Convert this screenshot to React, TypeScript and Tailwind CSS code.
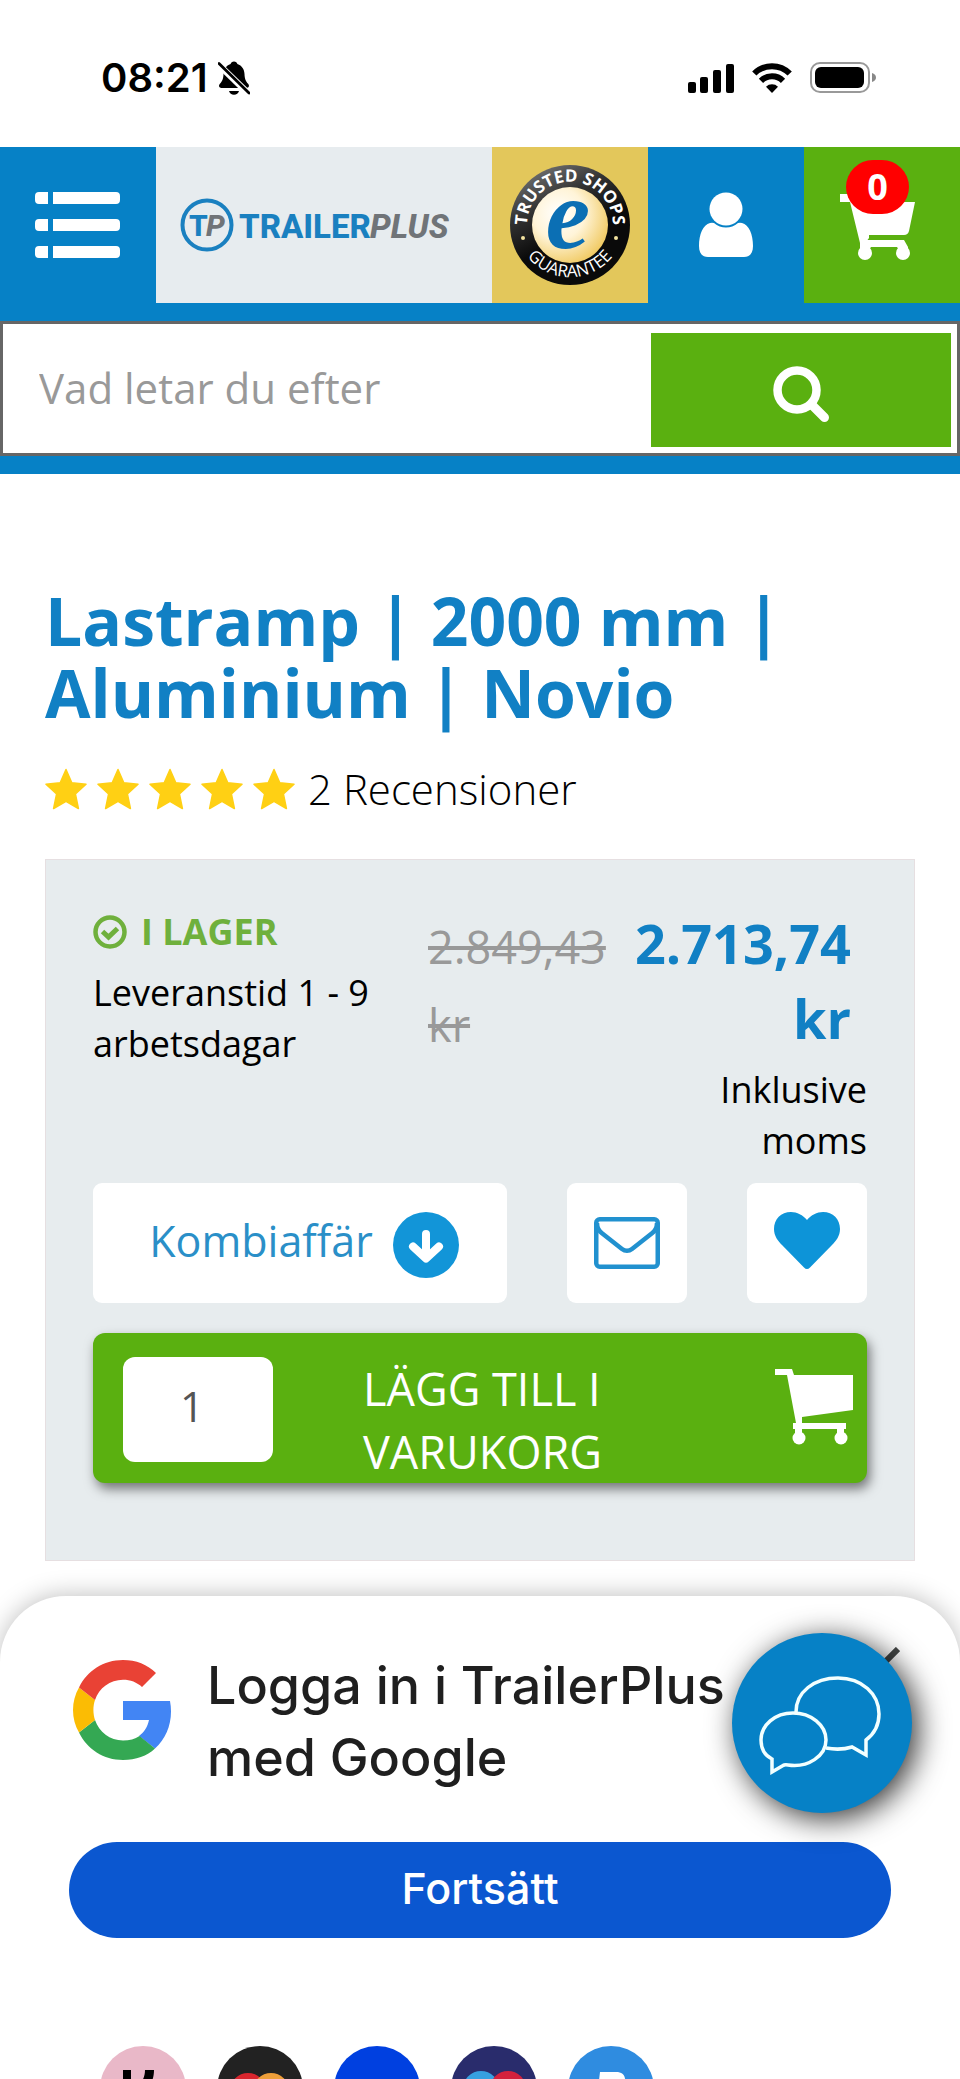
import React from "react";

const Star = () => (
  <svg viewBox="0 0 42 42" className="w-[42px] h-[42px]" fill="#ffd014" stroke="#ffd014" strokeWidth="1.500" strokeLinejoin="round" aria-hidden="true">
    <path d="M21 1.500l5.800 13.200 14.200 1.600-10.600 9.700 3 14.500L21 33.300 8.600 40.500l3-14.500L1 16.300l14.200-1.600z" />
  </svg>
);

const StatusBar = () => (
  <div className="h-[147px] pt-2 pl-[101px] pr-[84px] flex items-center justify-between">
    <div className="flex items-center gap-[10px]">
      <span className="font-['Inter',sans-serif] font-semibold text-[40px] leading-none text-black">
        08:21
      </span>
      <svg viewBox="0 0 32 36" className="w-8 h-9" aria-hidden="true">
        <path
          d="M16 1.500c-1.800 0-3 1-3.400 2.400C8 5.500 5.600 9.500 5.500 14c-.1 5-1.500 7.500-3.600 9.800-1.600 1.800-.9 4.200 1.600 4.200h25c2.500 0 3.200-2.400 1.600-4.200-2.100-2.300-3.500-4.800-3.600-9.800-.1-4.500-2.500-8.500-7.100-10.100C19 2.500 17.800 1.500 16 1.500zM11 31h10c-.5 2.300-2.600 3.800-5 3.800S11.500 33.300 11 31z"
          fill="#000"
        />
        <path d="M-1 3L33 36" stroke="#fff" strokeWidth="6.500" />
        <path d="M1 3.500L31 33" stroke="#000" strokeWidth="2.800" strokeLinecap="round" />
      </svg>
    </div>
    <div className="flex items-center gap-[18px]">
      <svg viewBox="0 0 46 30" className="w-[46px] h-[30px]" aria-hidden="true">
        <rect x="0" y="19" width="8" height="11" rx="2" />
        <rect x="12" y="14" width="8" height="16" rx="2" />
        <rect x="25" y="7" width="8" height="23" rx="2" />
        <rect x="38" y="1" width="8" height="29" rx="2" />
      </svg>
      <svg viewBox="0 0 40 30" className="w-10 h-[30px]" fill="none" stroke="#000" strokeWidth="6" aria-hidden="true">
        <path d="M2.300 10.500a25 25 0 0 1 35.400 0" />
        <path d="M9 17.800a15.500 15.500 0 0 1 22 0" />
        <path d="M20 30l-6-6.200a8.500 8.500 0 0 1 12 0z" fill="#000" stroke="none" />
      </svg>
      <svg viewBox="0 0 66 31" className="w-[66px] h-[31px]" aria-hidden="true">
        <rect x="1" y="1" width="58" height="29" rx="9" fill="none" stroke="#999" strokeWidth="2" />
        <rect x="5" y="5" width="49" height="21" rx="6" />
        <path d="M62 11c2.500.8 4 2.500 4 4.500S64.500 19.200 62 20z" fill="#888" />
      </svg>
    </div>
  </div>
);

const Logo = () => (
  <svg viewBox="0 0 280 54" className="w-[280px] h-[54px]" aria-label="TrailerPlus">
    <circle cx="27" cy="27" r="24.500" fill="none" stroke="#1a80c0" strokeWidth="4" />
    <g fontFamily="Roboto, sans-serif" fontWeight="800">
      <text x="9" y="38" fontSize="30" fill="#1a80c0">T</text>
      <text x="26" y="38" fontSize="30" fill="#707478" fontStyle="italic">P</text>
      <text x="59" y="40" fontSize="33" fill="#1a80c0">TRAILER</text>
      <text x="190" y="40" fontSize="33" fill="#707478" fontStyle="italic">PLUS</text>
    </g>
  </svg>
);

const TrustedSeal = () => (
  <svg viewBox="0 0 120 120" className="w-[120px] h-[120px]" aria-hidden="true">
    <defs>
      <linearGradient id="ring" x1="0.200" y1="0" x2="0.500" y2="0.600">
        <stop offset="0" stopColor="#777" />
        <stop offset="0.500" stopColor="#333" />
        <stop offset="1" stopColor="#0a0a0a" />
      </linearGradient>
      <radialGradient id="gold" cx="0.350" cy="0.350" r="0.750">
        <stop offset="0" stopColor="#fff" />
        <stop offset="0.450" stopColor="#fff4d8" />
        <stop offset="1" stopColor="#efc555" />
      </radialGradient>
      <path id="arcTop" d="M18.500 71A43 43 0 1 1 101.500 71" />
      <path id="arcBottom" d="M6 65A54.500 54.500 0 0 0 114 65" />
    </defs>
    <circle cx="60" cy="60" r="60" fill="url(#ring)" />
    <circle cx="60" cy="60" r="38" fill="url(#gold)" />
    <text fontFamily="'Open Sans', sans-serif" fontWeight="700" fontSize="17" fill="#fff" textAnchor="middle">
      <textPath href="#arcTop" startOffset="50%">TRUSTED SHOPS</textPath>
    </text>
    <text fontFamily="'Open Sans', sans-serif" fontSize="17" fill="#fff" textAnchor="middle">
      <textPath href="#arcBottom" startOffset="50%">GUARANTEE</textPath>
    </text>
    <circle cx="13" cy="73" r="2" fill="#f3e3a0" />
    <circle cx="106" cy="73" r="2" fill="#f3e3a0" />
    <text x="58" y="83" textAnchor="middle" fontFamily="'Liberation Serif', serif" fontStyle="italic" fontWeight="700" fontSize="100" fill="#0b6fb4">
      e
    </text>
  </svg>
);

const Header = () => (
  <header className="bg-[#0681c6] pb-[18px]">
    <div className="flex h-[156px]">
      <button aria-label="Meny" className="w-[156px] flex items-center justify-center">
        <svg viewBox="0 0 86 68" className="w-[86px] h-[68px]" fill="#fff">
          <path d="M4 1h9v12H4a4 4 0 0 1-4-4V5a4 4 0 0 1 4-4zM18 1h63a4 4 0 0 1 4 4v4a4 4 0 0 1-4 4H18z" />
          <path d="M4 28h9v12H4a4 4 0 0 1-4-4v-4a4 4 0 0 1 4-4zM18 28h63a4 4 0 0 1 4 4v4a4 4 0 0 1-4 4H18z" />
          <path d="M4 55h9v12H4a4 4 0 0 1-4-4v-4a4 4 0 0 1 4-4zM18 55h63a4 4 0 0 1 4 4v4a4 4 0 0 1-4 4H18z" />
        </svg>
      </button>
      <a href="#" className="flex-1 bg-[#e7ecef] flex items-center pl-6">
        <Logo />
      </a>
      <a href="#" aria-label="Trusted Shops" className="w-[156px] bg-[#e3c75b] flex items-center justify-center">
        <TrustedSeal />
      </a>
      <a href="#" aria-label="Mitt konto" className="w-[156px] flex items-center justify-center">
        <svg viewBox="0 0 54 66" className="w-[54px] h-[66px]" fill="#fff">
          <path d="M11 31C4 33 0 42 0 54c0 7 3 11 9 11h36c6 0 9-4 9-11 0-12-4-21-11-23a8 8 0 0 0-4 0c-7 6-17 6-24 0a8 8 0 0 0-4 0z" />
          <circle cx="27" cy="17" r="16.500" />
        </svg>
      </a>
      <a href="#" aria-label="Varukorg" className="relative w-[156px] pr-2 pt-1 bg-[#5ab010] flex items-center justify-center">
        <svg viewBox="0 0 76 66" className="w-[76px] h-[66px]" fill="#fff">
          <path d="M0 0h14l3 8h58l-6 29q-1 4-5 4H29v3l-3 4-6 1L10 8H0z" />
          <path d="M20 46h44l4 7v3h-9l-2-3H31l-2 3h-9z" />
          <circle cx="25" cy="59" r="7" />
          <circle cx="63" cy="59" r="7" />
        </svg>
        <span className="absolute left-[42px] top-[13px] w-[63px] h-[54px] rounded-[27px] bg-[#ff0000] text-white text-[36px] leading-[54px] font-bold text-center">
          0
        </span>
      </a>
    </div>
    <form className="mt-[18px] border-3 border-[#666] bg-white flex pt-[9px] pb-[6px] pr-[6px]">
      <input
        type="text"
        aria-label="Sök"
        placeholder="Vad letar du efter"
        className="flex-1 min-w-0 pl-9 pb-[6px] text-[42px] placeholder:text-[#999] outline-none"
      />
      <button type="button" aria-label="Sök" className="w-[300px] h-[114px] pt-2 bg-[#5ab010] flex items-center justify-center">
        <svg viewBox="0 0 58 58" className="w-[58px] h-[58px]" fill="none" stroke="#fff" strokeLinecap="round">
          <circle cx="25" cy="25" r="19.500" strokeWidth="8.500" />
          <path d="M41 41l11.500 11.500" strokeWidth="9" />
        </svg>
      </button>
    </form>
  </header>
);

const BuyBox = () => (
  <section className="mt-10 border border-[#e6dfe1] bg-[#e7ecee] px-[47px] pt-[46px] pb-[77px]">
    <div className="grid grid-cols-[335px_1fr_254px] text-[36px] leading-[51px] text-black">
      <div>
        <p className="flex items-center gap-[14px] font-bold text-[#6fb03c]">
          <svg viewBox="0 0 34 34" className="w-[34px] h-[34px]" fill="none" stroke="#6fb03c" aria-hidden="true">
            <circle cx="17" cy="17" r="14.500" strokeWidth="4.500" />
            <path d="M9.500 16.500l6 5.500 9-8.500" strokeWidth="5" />
          </svg>
          I LAGER
        </p>
        <p className="mt-[10px]">
          Leveranstid 1 - 9<br />
          arbetsdagar
        </p>
      </div>
      <s className="pt-[2px] text-[45px] leading-[78px] text-[#999]">
        2.849,43<br />
        kr
      </s>
      <div className="text-right">
        <p className="pr-4 text-[54px] leading-[75px] font-bold text-[#1180c4]">
          2.713,74<br />
          kr
        </p>
        <p className="mt-2">
          Inklusive<br />
          moms
        </p>
      </div>
    </div>

    {/* Secondary actions */}
    <div className="mt-[17px] flex gap-[60px]">
      <button className="flex-1 h-[120px] pb-1 pl-2 rounded-[9px] bg-white flex items-center justify-center gap-5 text-[43px] font-medium text-[#2a8fc8]">
        Kombiaffär
        <svg viewBox="0 0 66 66" className="mt-2 w-[66px] h-[66px]" aria-hidden="true">
          <circle cx="33" cy="33" r="33" fill="#1295d8" />
          <path d="M33 22v24M20 34.500l13 12 13-12" fill="none" stroke="#fff" strokeWidth="8" strokeLinecap="round" strokeLinejoin="round" />
        </svg>
      </button>
      <button aria-label="E-post" className="w-[120px] h-[120px] rounded-[9px] bg-white flex items-center justify-center">
        <svg viewBox="0 0 66 52" className="w-[66px] h-[52px]" fill="none" stroke="#2191cf" strokeWidth="4.500">
          <rect x="2.250" y="2.250" width="61.500" height="47.500" rx="3.500" />
          <path d="M3 6c0 5 2 8 5 10.300L28 32c3 2.300 7 2.300 10 0l20-15.700C61 14 63 11 63 6" />
        </svg>
      </button>
      <button aria-label="Favorit" className="w-[120px] h-[120px] pb-[6px] rounded-[9px] bg-white flex items-center justify-center">
        <svg viewBox="0 0 66 57" className="w-[66px] h-[57px]" fill="#0d94d8">
          <path d="M33 8C29 3 23 0 17 0 7 0 0 7 0 17c0 7 4 12 8 16l22 22.500c2 2 4 2 6 0L58 33c4-4 8-9 8-16C66 7 59 0 49 0c-6 0-12 3-16 8z" />
        </svg>
      </button>
    </div>

    {/* Add to cart */}
    <div className="mt-[30px] h-[150px] pt-6 pl-[30px] pr-[14px] rounded-[12px] bg-[#5ab010] shadow-[3px_6px_12px_rgba(0,0,0,0.5)] flex items-start">
      <input
        type="text"
        aria-label="Antal"
        defaultValue="1"
        className="w-[150px] h-[105px] pr-3 pb-2 rounded-[12px] bg-white text-[42px] text-[#555] text-center outline-none"
      />
      <button className="flex-1 pl-[90px] flex items-start justify-between text-left text-[45px] leading-[63px] font-medium text-white">
        <span>
          LÄGG TILL I<br />
          VARUKORG
        </span>
        <svg viewBox="0 0 78 76" className="mt-3 w-[78px] h-[76px]" fill="#fff" aria-hidden="true">
          <path d="M0 0h17l2 6h59v35L27 48v6h44v6H18v-6h3L12 6H0z" />
          <circle cx="24" cy="69" r="6.500" />
          <circle cx="66" cy="69" r="6.500" />
          <path d="M20 58h7v8h-7zM62 58h7v8h-7z" />
        </svg>
      </button>
    </div>
  </section>
);

const PaymentMethods = () => (
  <footer className="mt-[108px] h-[33px] overflow-hidden pl-[31px] flex gap-[31px]">
    <span className="w-[86px] h-[86px] shrink-0 rounded-full bg-[#e9b8c8]">
      <svg viewBox="0 0 86 86" aria-label="Klarna">
        <path d="M23 24h8v36h-8zM45 24h9c0 10-4 17-11 22l11 14H43L32 45c8-5 13-12 13-21z" />
      </svg>
    </span>
    <span className="w-[86px] h-[86px] shrink-0 rounded-full bg-[#222]">
      <svg viewBox="0 0 86 86" aria-label="Mastercard">
        <circle cx="31" cy="45" r="18" fill="#d9262e" />
        <circle cx="54" cy="45" r="18" fill="#ee9f3a" />
      </svg>
    </span>
    <span className="w-[86px] h-[86px] shrink-0 rounded-full bg-[#0040e0]" />
    <span className="w-[86px] h-[86px] shrink-0 rounded-full bg-[#292c6c]">
      <svg viewBox="0 0 86 86" aria-label="Maestro">
        <circle cx="30" cy="43" r="18" fill="#36a0e0" />
        <circle cx="57" cy="43" r="18" fill="#d4213d" />
      </svg>
    </span>
    <span className="w-[86px] h-[86px] shrink-0 rounded-full bg-[#2f8ce0]">
      <svg viewBox="0 0 86 86" aria-label="PayPal">
        <path d="M32 26h16c7 0 10 4 9 11-1 8-6 12-14 12h-5l-2 12H28z" fill="#fff" />
      </svg>
    </span>
  </footer>
);

const GoogleSheet = () => (
  <section className="relative mt-[35px] px-[69px] pt-[54px] rounded-t-[66px] bg-white shadow-[0_-1px_24px_rgba(0,0,0,0.250)]">
    <div className="flex items-start pl-1 gap-9">
      <svg viewBox="0 0 98 100" className="mt-[10px] w-[98px] h-[100px] shrink-0" aria-hidden="true">
        <path fill="#4285f4" d="M97 41c.7 3.500 1 7 1 10.500 0 15-6 28-16 37L66 76c5-3.500 8.500-9 10-16H50V41z" />
        <path fill="#34a853" d="M82 88.500C74 96 63 100 50 100 30.500 100 14 89 6 72.500L22 60c4 12 15 20.500 28 20.500 6.500 0 12-1.500 16.500-4.500z" />
        <path fill="#fbbc04" d="M6 72.500C2 65.500 0 58 0 50s2-15.500 6-22.500L22 40c-1 3-1.600 6.500-1.600 10s.6 7 1.600 10z" />
        <path fill="#e94235" d="M6 27.500C14 11 30.500 0 50 0c13 0 24.500 4.500 33 13L69 27c-5-4.800-11.500-7.300-19-7.300C37 19.700 26 28 22 40z" />
      </svg>
      <h2 className="font-['Inter',sans-serif] font-medium text-[52px] leading-[72px] text-[#1f1f1f]">
        Logga in i TrailerPlus<br />
        med Google
      </h2>
    </div>
    <button className="mt-12 w-full h-24 pb-1 rounded-full bg-[#0b57d0] font-['Inter',sans-serif] font-medium text-[43px] text-white">
      Fortsätt
    </button>
    <PaymentMethods />
    {/* Close cross, mostly hidden by the chat bubble */}
    <button aria-label="Stäng" className="absolute right-[60px] top-[51px] w-[44px] h-[44px]">
      <svg viewBox="0 0 44 44" className="w-[44px] h-[44px]" stroke="#444746" strokeWidth="6">
        <path d="M2 42L42 2M2 2l40 40" />
      </svg>
    </button>
    <button
      aria-label="Chatt"
      className="absolute right-12 top-[37px] w-[180px] h-[180px] pr-1 pt-1 rounded-full bg-[#0681c6] shadow-[6px_6px_30px_rgba(0,0,0,0.800)] flex items-center justify-center"
    >
      <svg viewBox="0 0 122 100" className="w-[122px] h-[100px]" fill="none" stroke="#f2ffff" strokeWidth="3.500">
        <path d="M37 37C37 17 55 3 79 3c24 0 41 16 41 36 0 11-5 20-13 26v15L93 72c-8 2.500-18 2.500-26 1" />
        <path d="M34 38c18 0 33 12 33 27 0 16-18 28-38 25-2-.3-4-.2-5 .5L13 97V84C5 80 2 73 2 65c0-15 14-27 32-27z" />
      </svg>
    </button>
  </section>
);

const App = () => {
  return (
    <div className="bg-white overflow-hidden font-['Open_Sans','Noto_Sans',sans-serif]">
      <StatusBar />
      <Header />
      <main className="px-[45px] pt-[110px]">
        <h1 className="text-[66px] leading-[72px] font-bold text-[#1180c4]">
          Lastramp | 2000 mm |<br />
          Aluminium | Novio
        </h1>
        <div className="mt-[31px] flex items-center gap-[13px]">
          <div className="flex gap-[10px]" role="img" aria-label="5 av 5">
            <Star />
            <Star />
            <Star />
            <Star />
            <Star />
          </div>
          <a href="#" className="text-[42px] leading-[60px] font-light text-black">
            2 Recensioner
          </a>
        </div>
        <BuyBox />
      </main>
      <GoogleSheet />
    </div>
  );
};

export default App;
